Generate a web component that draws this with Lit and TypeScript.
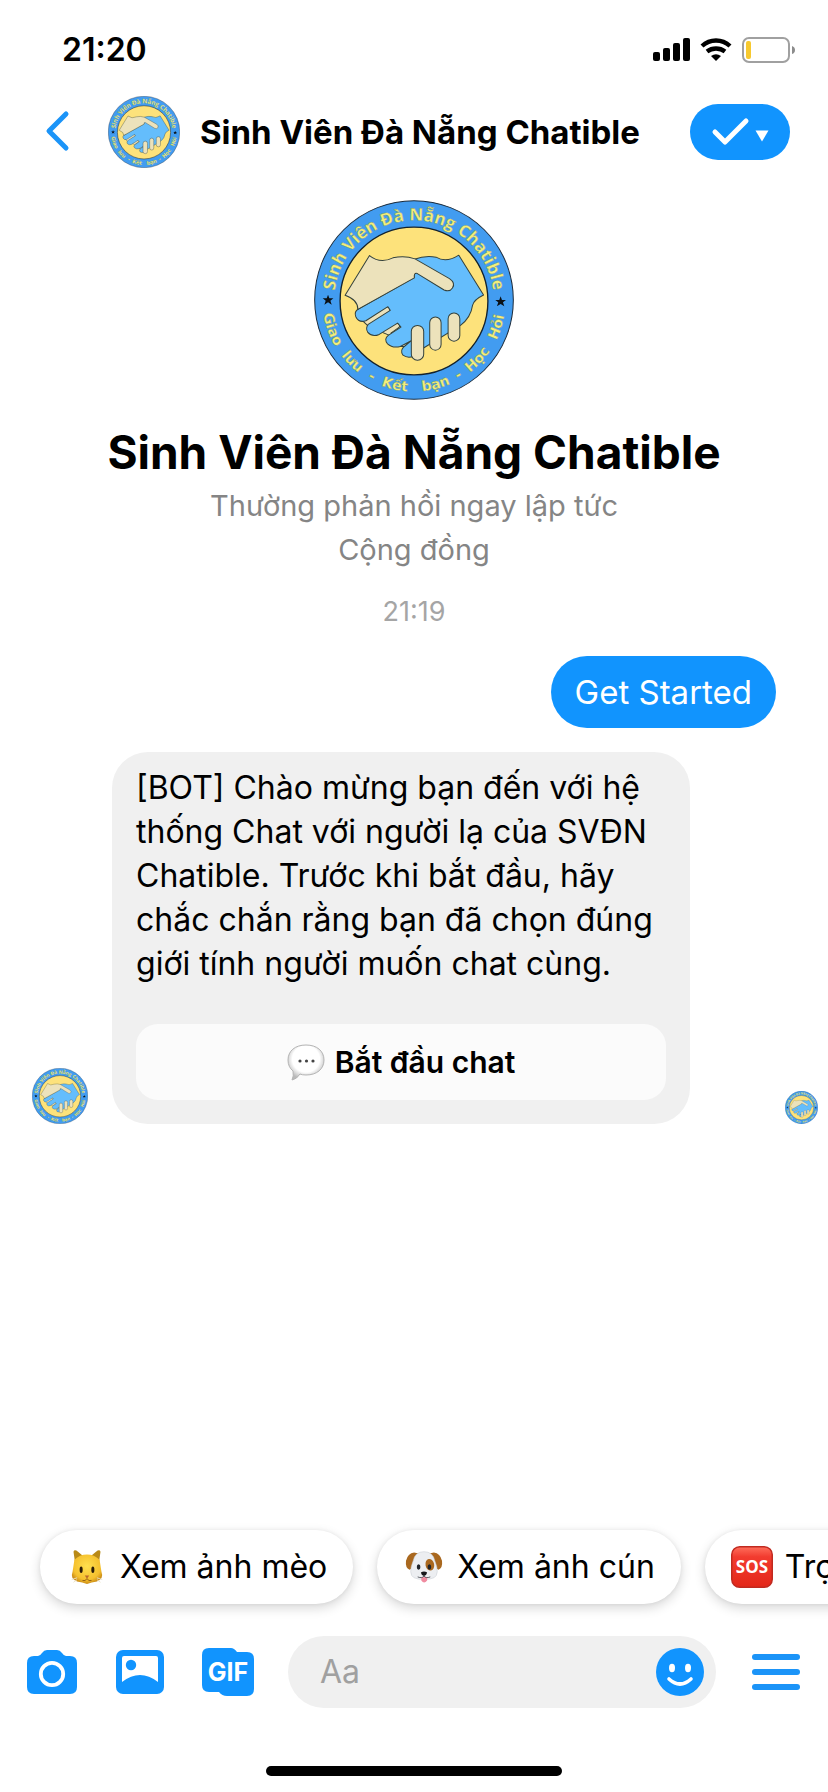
import { LitElement, html, css, svg } from "lit";
import { customElement } from "lit/decorators.js";

/* Round community badge: ring with lettering around a handshake. */
@customElement("community-badge")
class CommunityBadge extends LitElement {
  static styles = css`
    :host { display: block; flex: none; }
    .badge { display: block; width: 100%; height: 100%; }
    .lettering { font-weight: 700; fill: #f3ee7c; stroke: #6f8f66; stroke-width: 1; }
    .top { font-family: "Open Sans", "Noto Sans", sans-serif; font-size: 51px; }
    .bottom { font-family: "DejaVu Sans", sans-serif; font-size: 42px; }
    .line { stroke: #33413c; stroke-width: 3; stroke-linejoin: round; }
  `;
  render() {
    return html`<svg class="badge" viewBox="42 30 598 598" role="img" aria-label="Sinh Viên Đà Nẵng Chatible">
      <defs>
        <path id="arc-top" d="M103 329A238 238 0 0 1 579 329" />
        <path id="arc-bottom" d="M67 329A274 274 0 0 0 615 329" />
      </defs>
      <circle cx="341" cy="329" r="297" fill="#429cf0" stroke="#1c2b3a" stroke-width="3" />
      <circle cx="341" cy="332" r="221" fill="#fde27b" stroke="#14222c" stroke-width="4" />
      <text class="lettering top" text-anchor="middle"><textPath href="#arc-top" startOffset="50%">Sinh Viên Đà Nẵng Chatible</textPath></text>
      ${[
        ["Giao", "11%"], ["lưu", "25%"], ["-", "34%"], ["Kết", "43%"], ["bạn", "58%"],
        ["-", "67%"], ["Học", "76%"], ["Hỏi", "90%"],
      ].map(([word, at]) => svg`<text class="lettering bottom" text-anchor="middle"><textPath href="#arc-bottom" startOffset=${at}>${word}</textPath></text>`)}
      <path fill="#0b1116" d="M84 313l4 11h12l-9 7 4 12-11-7-11 7 4-12-9-7h12zM600 318l4 11h12l-9 7 4 12-11-7-11 7 4-12-9-7h12z" />
      <path class="line" fill="#ece2bb" d="M175 350L265 350Q277 365 258 372L235 388 290 398Q306 405 293 413L272 428 333 440V468L300 468 280 440 205 408 170 375Z" />
      <path class="line" fill="#64bdfc" d="M342 207Q375 195 407 201Q437 219 475 195L549 314Q520 328 516 345Q511 381 480 405L372 471Q358 480 352 472L340 497Q322 504 308 494Q298 480 312 468L334 450 300 468Q277 474 262 460Q250 446 264 435L302 410 292 398 237 432Q216 441 203 426Q195 414 204 402L270 360 263 349 197 391Q176 398 167 379Q161 364 175 356L342 262Z" />
      <path class="line" fill="#ece2bb" d="M208 196Q240 222 278 203Q313 195 344 206L447 265Q466 278 456 293Q448 306 431 299L351 250Q340 246 342 263L173 357Q174 329 135 315Z" />
      <g class="line" fill="#ece2bb">
        <rect x="333" y="405" width="37" height="104" rx="18" />
        <rect x="388" y="380" width="34" height="99" rx="17" />
        <rect x="443" y="368" width="35" height="84" rx="17" />
      </g>
    </svg>`;
  }
}

const cat = html`<svg class="emoji" viewBox="0 0 40 40" aria-hidden="true">
  <defs><radialGradient id="fur" cx=".5" cy=".4" r=".6"><stop offset="0" stop-color="#ffe04f" /><stop offset=".75" stop-color="#f5c02e" /><stop offset="1" stop-color="#c98a15" /></radialGradient></defs>
  <path fill="#b98a17" d="M5 3Q6 0 10 3L17 9 7 17ZM35 3Q34 0 30 3L23 9 33 17Z" />
  <path fill="url(#fur)" d="M6 12Q12 6 20 6T34 12L36 25Q39 33 31 36Q25 37 20 39Q15 37 9 36Q1 33 4 25Z" />
  <ellipse cx="13.500" cy="23" rx="1.700" ry="3.600" fill="#2c1d08" /><ellipse cx="26.500" cy="23" rx="1.700" ry="3.600" fill="#2c1d08" />
  <path fill="#b96a2b" d="M17.500 29.500h5L20 33z" />
  <path fill="none" stroke="#8b5a14" stroke-width="1" d="M15 35Q18 36 20 33Q22 36 25 35" />
  <path stroke="#e9e2c8" stroke-width="1" d="M9 32L3 34M31 32L37 34M9 34L5 37M31 34L35 37" />
</svg>`;

const dog = html`<svg class="emoji" viewBox="0 0 40 40" aria-hidden="true">
  <path fill="#a9681f" d="M9 4Q2 5 0 13Q-1 21 4 23Q8 22 10 12L14 5ZM31 4Q38 5 40 13Q41 21 36 23Q32 22 30 12L26 5Z" />
  <path fill="#eceef1" stroke="#c8ccd2" stroke-width=".6" d="M20 3Q30 3 32 13Q38 28 31 32Q26 34 20 34Q14 34 9 32Q2 28 8 13Q10 3 20 3Z" />
  <ellipse cx="26.500" cy="17.500" rx="4.800" ry="6.500" fill="#a9681f" transform="rotate(-12 26.500 17.500)" />
  <ellipse cx="14" cy="20" rx="2" ry="3" fill="#20242a" /><ellipse cx="26" cy="20" rx="2" ry="3" fill="#20242a" />
  <path fill="#f08ba0" d="M17 31h6.500v4Q20 39.500 17 35z" />
  <path fill="#15171a" d="M16.500 26Q20 24 23.500 26Q23 29 20 30Q17 29 16.500 26Z" />
  <path fill="none" stroke="#4d5158" stroke-width="1" d="M13 31Q18 33 20 30Q22 33 27 31" />
</svg>`;

const sos = html`<svg class="emoji wide" viewBox="0 0 42 42" aria-hidden="true">
  <defs><linearGradient id="sos-red" x2="0" y2="1"><stop offset="0" stop-color="#ff6f5c" /><stop offset=".25" stop-color="#f23b2f" /><stop offset="1" stop-color="#e32719" /></linearGradient></defs>
  <rect x=".75" y=".75" width="40.500" height="40.500" rx="8" fill="url(#sos-red)" stroke="#c02a20" stroke-width="1.500" />
  <text class="sos" x="21" y="27" text-anchor="middle">SOS</text>
</svg>`;

@customElement("app-root")
class AppRoot extends LitElement {
  static styles = css`
    :host {
      display: flex; flex-direction: column; min-height: 100vh; background: #fff; color: #000;
      font-family: Inter, "Noto Sans", sans-serif; font-size: 32px; line-height: 44px;
      --blue: #1194fe; --grey: #f0f0f0;
    }
    * { box-sizing: border-box; }
    button { font: inherit; color: inherit; border: 0; padding: 0; background: none; display: flex; align-items: center; justify-content: center; flex: none; }
    svg { display: block; flex: none; }
    h1, h2, p { margin: 0; }
    .status { display: flex; align-items: center; justify-content: space-between; height: 88px; padding: 12px 32px 0 62px; font-weight: 600; }
    .signals { display: flex; align-items: center; gap: 10px; }
    .header { display: flex; align-items: center; height: 88px; padding: 0 38px 0 44px; }
    .back { width: 28px; height: 56px; }
    .header-badge { width: 72px; height: 72px; margin: 0 20px 0 36px; }
    .header h1 { font-size: 33px; font-weight: 700; flex: 1; white-space: nowrap; }
    .verified { width: 100px; height: 56px; border-radius: 28px; background: var(--blue); }
    .thread { flex: 1; padding: 24px 10px 24px 32px; }
    .profile { display: flex; flex-direction: column; align-items: center; padding-right: 22px; padding-bottom: 24px; text-align: center; color: #858585; font-size: 29px; }
    .profile-badge { width: 200px; height: 200px; margin: 0 0 20px; }
    .profile h2 { font-size: 46px; font-weight: 700; line-height: 64px; color: #000; }
    .stamp { display: block; padding-right: 22px; text-align: center; font-size: 27px; line-height: 32px; color: #a5a5a5; }
    .sent { display: flex; justify-content: flex-end; padding-right: 42px; margin: 28px 0 24px; }
    .sent p { padding: 14px 24px; border-radius: 36px; background: var(--blue); color: #fff; font-size: 33px; }
    .received { display: flex; align-items: flex-end; }
    .sender { width: 56px; height: 56px; margin-right: 24px; }
    .bubble { flex: 0 1 578px; padding: 14px 24px 24px; border-radius: 36px; background: var(--grey); }
    .start { width: 100%; height: 76px; margin-top: 38px; gap: 10px; border-radius: 22px; background: #fbfbfb; font-size: 30px; font-weight: 600; }
    .seen { width: 33px; height: 33px; margin-left: auto; }
    .replies { display: flex; gap: 24px; padding: 16px 40px; overflow-x: auto; scrollbar-width: none; }
    .reply { height: 74px; padding: 0 26px; gap: 12px; border-radius: 37px; background: #fff; white-space: nowrap; box-shadow: 0 4px 12px rgba(0, 0, 0, .16), 0 0 4px rgba(0, 0, 0, .06); }
    .emoji { width: 42px; height: 36px; }
    .emoji.wide { height: 42px; }
    .sos { font: 700 17px "Open Sans", sans-serif; fill: #fff; }
    .composer { display: flex; align-items: center; padding: 16px 26px 58px; }
    .tools { display: flex; align-items: center; gap: 36px; }
    .tools button, .more { width: 52px; height: 56px; }
    .gif { font: 700 25px Inter, sans-serif; fill: #fff; }
    .field { display: flex; align-items: center; flex: 1; min-width: 0; height: 72px; margin: 0 34px; padding: 0 12px 0 32px; border-radius: 36px; background: var(--grey); }
    .field input { flex: 1; min-width: 0; border: 0; padding: 0; outline: 0; background: none; font: inherit; color: #000; }
    .field input::placeholder { color: #a0a0a0; opacity: 1; }
    .home { width: 296px; height: 10px; margin: 0 auto 16px; border-radius: 5px; background: #000; }
  `;

  render() {
    return html`
      <div class="status">
        <time>21:20</time>
        <div class="signals">
          <svg width="37" height="24" viewBox="0 0 37 24" aria-label="Signal"><rect y="14" width="7" height="9" rx="2" /><rect x="10" y="10" width="7" height="13" rx="2" /><rect x="20" y="5" width="7" height="18" rx="2" /><rect x="30" width="7" height="23" rx="2" /></svg>
          <svg width="32" height="24" viewBox="0 0 32 24" aria-label="Wi-Fi"><g fill="none" stroke="#000" stroke-width="4.400"><path d="M2 8Q8 2.500 16 2.500T30 8" /><path d="M7 13.500Q11 10.500 16 10.500T25 13.500" /></g><path d="M11 18Q16 14.500 21 18L16 23Z" /></svg>
          <svg width="54" height="26" viewBox="0 0 54 26" aria-label="Battery"><rect x="1" y="1" width="46" height="24" rx="6" fill="none" stroke="#a0a0a0" stroke-width="2" /><rect x="4" y="4" width="5" height="18" rx="2" fill="#f7c92f" /><path d="M50 9Q53 10 53 13T50 17Z" fill="#8c8c8c" /></svg>
        </div>
      </div>
      <header class="header">
        <button class="back" aria-label="Quay lại"><svg width="28" height="44" viewBox="0 0 28 44" fill="none" stroke="#1b94f8" stroke-width="5" stroke-linecap="round" stroke-linejoin="round"><path d="M22 4L5 21 22 38" /></svg></button>
        <community-badge class="header-badge"></community-badge>
        <h1>Sinh Viên Đà Nẵng Chatible</h1>
        <button class="verified" aria-label="Tùy chọn trang"><svg width="100" height="56" viewBox="0 0 100 56"><path fill="none" stroke="#fff" stroke-width="5" stroke-linecap="round" stroke-linejoin="round" d="M25 28L35 38 56 17" /><path fill="#fff" d="M65.500 26.500H78.500L72 37.500Z" /></svg></button>
      </header>
      <main class="thread">
        <section class="profile">
          <community-badge class="profile-badge"></community-badge>
          <h2>Sinh Viên Đà Nẵng Chatible</h2>
          <p>Thường phản hồi ngay lập tức</p>
          <p>Cộng đồng</p>
        </section>
        <time class="stamp">21:19</time>
        <div class="sent"><p>Get Started</p></div>
        <div class="received">
          <community-badge class="sender"></community-badge>
          <div class="bubble">
            <p>[BOT] Chào mừng bạn đến với hệ thống Chat với người lạ của SVĐN Chatible. Trước khi bắt đầu, hãy chắc chắn rằng bạn đã chọn đúng giới tính người muốn chat cùng.</p>
            <button class="start">
              <svg width="38" height="38" viewBox="0 0 38 38" aria-hidden="true"><defs><radialGradient id="speech" cx=".5" cy=".4" r=".58"><stop offset=".65" stop-color="#fff" /><stop offset="1" stop-color="#b9b9b9" /></radialGradient></defs><path fill="url(#speech)" stroke="#b4b4b4" stroke-width="1" d="M19 2C30 2 37 8 37 17S30 32 19 32Q15 32 13 31Q10 36 5 37Q7 33 6 28Q1 24 1 17C1 8 8 2 19 2Z" /><g fill="#444"><circle cx="13" cy="18" r="1.600" /><circle cx="19.500" cy="18" r="1.600" /><circle cx="26" cy="18" r="1.600" /></g></svg>
              <span>Bắt đầu chat</span>
            </button>
          </div>
          <community-badge class="seen"></community-badge>
        </div>
      </main>
      <nav class="replies" aria-label="Trả lời nhanh">
        <button class="reply">${cat}<span>Xem ảnh mèo</span></button>
        <button class="reply">${dog}<span>Xem ảnh cún</span></button>
        <button class="reply">${sos}<span>Trợ giúp</span></button>
      </nav>
      <footer class="composer">
        <div class="tools">
          <button aria-label="Máy ảnh"><svg width="50" height="44" viewBox="0 0 50 44"><path fill="#1194fe" d="M7 6H11Q13 6 15 3Q17 0 20 0H30Q33 0 35 3Q37 6 39 6H43Q50 6 50 13V37Q50 44 43 44H7Q0 44 0 37V13Q0 6 7 6Z" /><circle cx="25" cy="24" r="11.200" fill="none" stroke="#fff" stroke-width="3.800" /></svg></button>
          <button aria-label="Thư viện ảnh"><svg width="48" height="44" viewBox="0 0 48 44"><rect width="48" height="44" rx="7" fill="#1194fe" /><path fill="#fff" d="M6 8Q6 6 8 6H40Q42 6 42 8V32Q24 18 6 32Z" /><circle cx="15" cy="15" r="5.200" fill="#1194fe" /></svg></button>
          <button aria-label="Ảnh động"><svg width="52" height="48" viewBox="0 0 52 48"><path fill="#1194fe" d="M7 0H29Q32 0 35 4H45Q52 4 52 11V41Q52 48 45 48H25Q20 48 17 44H7Q0 44 0 37V7Q0 0 7 0Z" /><text class="gif" x="26" y="33" text-anchor="middle">GIF</text></svg></button>
        </div>
        <div class="field">
          <input type="text" placeholder="Aa" aria-label="Tin nhắn" />
          <button aria-label="Biểu tượng cảm xúc"><svg width="48" height="48" viewBox="0 0 48 48"><circle cx="24" cy="24" r="24" fill="#1194fe" /><ellipse cx="16" cy="20" rx="3" ry="4.200" fill="#fff" /><ellipse cx="32" cy="20" rx="3" ry="4.200" fill="#fff" /><path fill="none" stroke="#fff" stroke-width="3.600" stroke-linecap="round" d="M13 31Q24 41 35 31" /></svg></button>
        </div>
        <button class="more" aria-label="Trình đơn"><svg width="48" height="36" viewBox="0 0 48 36" fill="#1b94f8"><rect width="48" height="6" rx="3" /><rect y="15" width="48" height="6" rx="3" /><rect y="30" width="48" height="6" rx="3" /></svg></button>
      </footer>
      <div class="home"></div>
    `;
  }
}
